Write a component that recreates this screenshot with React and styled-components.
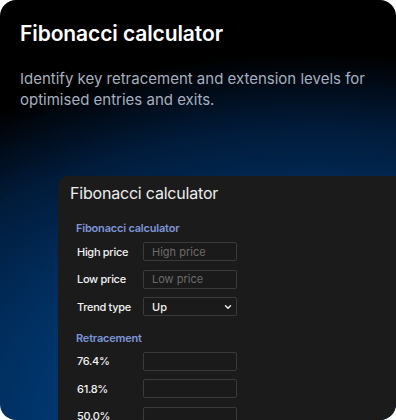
import React from 'react';
import styled, { createGlobalStyle } from 'styled-components';
import { ChevronDown } from 'lucide-react';

const GlobalStyle = createGlobalStyle`
  html, body {
    margin: 0;
    padding: 0;
    background: #ffffff;
  }
  * {
    box-sizing: border-box;
  }
`;

const Card = styled.div`
  width: 396px;
  height: 420px;
  border-radius: 16px;
  overflow: hidden;
  display: flex;
  flex-direction: column;
  padding: 20px 0 0 20px;
  font-family: Inter, "Open Sans", sans-serif;
  background:
    radial-gradient(ellipse 540px 340px at 80% 100%, #003a76 0%, #00366d 50%, #012b59 66%, #011b3a 86%, #000000 108%);
`;

const Heading = styled.h1`
  margin: 0;
  font-size: 21px;
  line-height: 28px;
  font-weight: 600;
  color: #ffffff;
  letter-spacing: -0.1px;
`;

const Lead = styled.p`
  margin: 20px 20px 0 0;
  font-size: 15px;
  line-height: 21px;
  font-weight: 400;
  color: #a7afbe;
`;

const Panel = styled.div`
  margin: 66px 0 0 38px;
  flex: 1;
  background: #1b1b1b;
  border-radius: 10px 0 0 0;
  padding: 6px 0 0 12px;
`;

const PanelTitle = styled.div`
  font-size: 16px;
  line-height: 22px;
  color: #eeeeee;
  letter-spacing: -0.2px;
`;

const Form = styled.div`
  padding: 17px 0 0 6px;
  display: flex;
  flex-direction: column;
`;

const Section = styled.div`
  font-size: 11px;
  line-height: 14px;
  font-weight: 600;
  color: #7d95d8;
  letter-spacing: -0.2px;
  margin-top: ${p => p.$top || 0}px;
  margin-bottom: 7px;
`;

const Row = styled.div`
  display: grid;
  grid-template-columns: 67px 94px;
  align-items: center;
  height: 19px;
  margin-bottom: 8.5px;
`;

const Label = styled.label`
  font-size: 11px;
  font-weight: 500;
  color: #f2f2f2;
  padding-left: 1px;
  letter-spacing: -0.3px;
`;

const Input = styled.input`
  width: 94px;
  height: 19px;
  background: #1a1a1a;
  border: 1px solid #3a3a3a;
  border-radius: 2px;
  padding: 0 8px;
  font-family: inherit;
  font-size: 11px;
  color: #eeeeee;
  outline: none;
  &::placeholder {
    color: #6c6c6c;
  }
`;

const SelectBox = styled.div`
  position: relative;
  width: 94px;
  height: 19px;
  border: 1px solid #3a3a3a;
  border-radius: 2px;
  background: #1a1a1a;
  display: flex;
  align-items: center;
  padding: 0 8px;
  font-size: 11px;
  font-weight: 500;
  color: #f0f0f0;
  svg {
    position: absolute;
    right: 3px;
    top: 4px;
  }
`;

const levels = ['76.4%', '61.8%', '50.0%', '38.2%'];

export default function App() {
  return (
    <>
      <GlobalStyle />
      <Card>
        <Heading>Fibonacci calculator</Heading>
        <Lead>Identify key retracement and extension levels for optimised entries and exits.</Lead>
        <Panel>
          <PanelTitle>Fibonacci calculator</PanelTitle>
          <Form>
            <Section>Fibonacci calculator</Section>
            <Row>
              <Label>High price</Label>
              <Input placeholder="High price" />
            </Row>
            <Row>
              <Label>Low price</Label>
              <Input placeholder="Low price" />
            </Row>
            <Row>
              <Label>Trend type</Label>
              <SelectBox>
                Up
                <ChevronDown size={10} strokeWidth={3.5} color="#e8e8e8" />
              </SelectBox>
            </Row>
            <Section $top={6}>Retracement</Section>
            {levels.map(l => (
              <Row key={l}>
                <Label>{l}</Label>
                <Input />
              </Row>
            ))}
          </Form>
        </Panel>
      </Card>
    </>
  );
}
